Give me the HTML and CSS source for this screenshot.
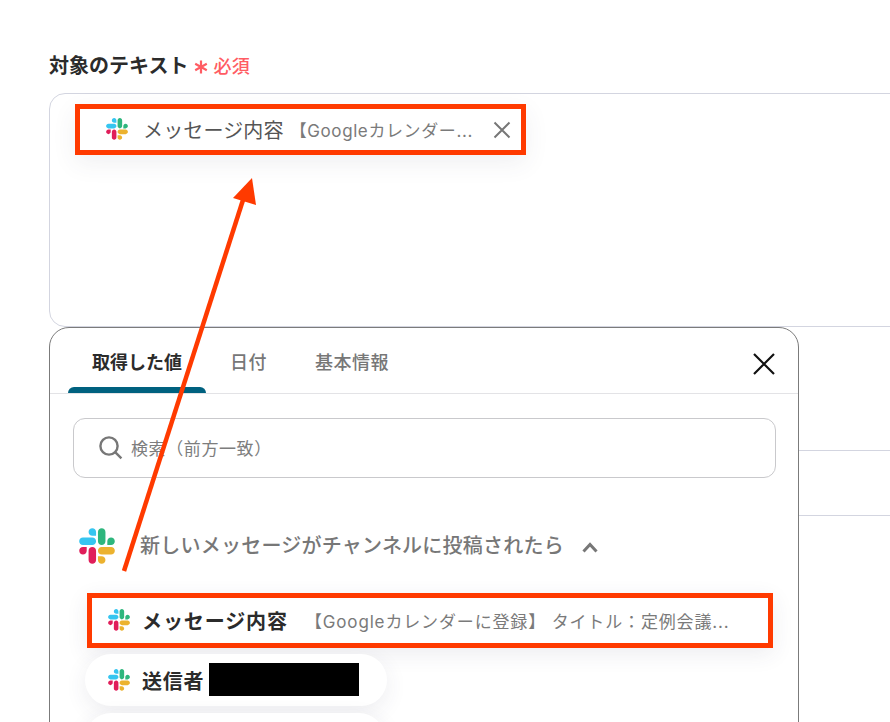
FILE: index.html
```html
<!DOCTYPE html>
<html lang="ja">
<head>
<meta charset="utf-8">
<title>対象のテキスト</title>
<link rel="stylesheet" href="styles.css">
</head>
<body>
<svg class="defs" width="0" height="0" aria-hidden="true">
  <symbol id="slack" viewBox="0 0 127 127">
    <path d="M27.2 80c0 7.3-5.9 13.2-13.2 13.2C6.7 93.2.8 87.3.8 80c0-7.3 5.9-13.2 13.2-13.2h13.2V80zm6.6 0c0-7.3 5.9-13.2 13.2-13.2 7.3 0 13.2 5.9 13.2 13.2v33c0 7.3-5.9 13.2-13.2 13.2-7.3 0-13.2-5.9-13.2-13.2V80z" fill="#E01E5A"/>
    <path d="M47 27c-7.3 0-13.2-5.9-13.2-13.2C33.8 6.5 39.7.6 47 .6c7.3 0 13.2 5.9 13.2 13.2V27H47zm0 6.7c7.3 0 13.2 5.9 13.2 13.2 0 7.3-5.9 13.2-13.2 13.2H13.9C6.6 60.1.7 54.2.7 46.9c0-7.3 5.9-13.2 13.2-13.2H47z" fill="#36C5F0"/>
    <path d="M99.9 46.9c0-7.3 5.9-13.2 13.2-13.2 7.3 0 13.2 5.9 13.2 13.2 0 7.3-5.9 13.2-13.2 13.2H99.9V46.9zm-6.6 0c0 7.3-5.9 13.2-13.2 13.2-7.3 0-13.2-5.9-13.2-13.2V13.8C66.9 6.5 72.8.6 80.1.6c7.3 0 13.2 5.9 13.2 13.2v33.1z" fill="#2EB67D"/>
    <path d="M80.1 99.8c7.3 0 13.2 5.9 13.2 13.2 0 7.3-5.9 13.2-13.2 13.2-7.3 0-13.2-5.9-13.2-13.2V99.8h13.2zm0-6.6c-7.3 0-13.2-5.9-13.2-13.2 0-7.3 5.9-13.2 13.2-13.2h33.1c7.3 0 13.2 5.9 13.2 13.2 0 7.3-5.9 13.2-13.2 13.2H80.1z" fill="#ECB22E"/>
  </symbol>
</svg>
<main class="page">
  <div class="label-row">
    <span class="label">対象のテキスト</span>
    <span class="required"><svg class="asterisk" viewBox="0 0 14 14"><path d="M7 .5v13M1.200 3.800l11.600 6.400M12.800 3.800 1.200 10.200" /></svg>必須</span>
  </div>
  <div class="textbox">
    <div class="chip">
      <svg class="logo-sm"><use href="#slack"/></svg>
      <span class="chip-name">メッセージ内容</span>
      <span class="chip-value">【Googleカレンダー...</span>
      <svg class="chip-x" viewBox="0 0 18 18"><path d="M1.500 1.500l15 15M16.500 1.500l-15 15"/></svg>
    </div>
  </div>
  <div class="rule rule-a"></div>
  <div class="rule rule-b"></div>

  <section class="panel">
    <div class="tabs">
      <div class="tab tab-active">取得した値</div>
      <div class="tab tab-date">日付</div>
      <div class="tab tab-info">基本情報</div>
      <svg class="close" viewBox="0 0 22 22"><path d="M1 1l20 20M21 1 1 21"/></svg>
    </div>
    <div class="search">
      <svg class="search-icon" viewBox="0 0 24 24"><circle cx="10" cy="10" r="8.600"/><path d="M16.400 16.400l6 6"/></svg>
      <span class="search-text">検索（前方一致）</span>
    </div>
    <div class="group-head">
      <svg class="logo-lg"><use href="#slack"/></svg>
      <span class="group-title">新しいメッセージがチャンネルに投稿されたら</span>
      <svg class="chevron" viewBox="0 0 16 11"><path d="M1.500 9.500 8 2.500l6.500 7"/></svg>
    </div>
    <div class="items">
      <div class="item item-framed">
        <svg class="logo-sm"><use href="#slack"/></svg>
        <span class="item-name">メッセージ内容</span>
        <span class="item-value">【Googleカレンダーに登録】 タイトル：定例会議...</span>
      </div>
      <div class="item item-pill">
        <svg class="logo-sm"><use href="#slack"/></svg>
        <span class="item-name">送信者</span>
        <span class="redacted"></span>
      </div>
      <div class="item item-pill item-next"></div>
    </div>
  </section>

  <svg class="arrow" viewBox="0 0 890 722">
    <path class="arrow-line" d="M124 571 243 200"/>
    <path class="arrow-head" d="M252 178 256 205 233 198Z"/>
  </svg>
</main>
</body>
</html>
```
FILE: styles.css
```css
* { box-sizing: border-box; }
html, body { margin: 0; padding: 0; background: #fff; }
body {
  font-family: Inter, "Noto Sans CJK JP", "Noto Sans", sans-serif;
  color: #333;
}
.defs { position: absolute; }
.page {
  position: relative;
  width: 890px;
  height: 722px;
  overflow: hidden;
  padding: 50px 0 0 49px;
}
.label-row { display: flex; align-items: center; height: 29px; }
.label { font-size: 20px; font-weight: 600; color: #2b2b2b; }
.required {
  display: flex; align-items: center; gap: 5px;
  margin-left: 6px;
  font-size: 18px; font-weight: 500; color: #ff5c63;
  letter-spacing: .3px;
}
.asterisk { width: 14px; height: 14px; margin-top: 4px; fill: none; stroke: #ff5c63; stroke-width: 2.200; }
.textbox {
  width: 900px;
  height: 234px;
  margin-top: 14px;
  padding: 10px 0 0 25px;
  border: 1px solid #d3d5e0;
  border-radius: 16px;
}
.chip {
  display: flex; align-items: center;
  width: 451px; height: 51px;
  padding: 0 10px 0 26px;
  border: 5px solid #ff3a00;
  background: #fff;
  box-shadow: 0 8px 24px rgba(60, 60, 90, .08);
}
.logo-sm { width: 22px; height: 22px; flex: none; margin-bottom: 1px; }
.item-pill .logo-sm { margin-bottom: 0; }
.logo-lg { width: 36px; height: 36px; flex: none; }
.chip-name { margin-left: 15px; font-size: 20px; color: #555; white-space: nowrap; letter-spacing: .15px; }
.chip-value { margin-left: 6px; font-size: 17px; color: #7a7a7a; letter-spacing: .6px; white-space: nowrap; }
.chip-x { width: 18px; height: 18px; margin-left: auto; fill: none; stroke: #777; stroke-width: 2; }
.rule { width: 841px; height: 1px; background: #d3d5e0; }
.rule-a { margin-top: 123px; }
.rule-b { margin-top: 64px; }

.panel {
  position: absolute;
  left: 49px; top: 327px;
  width: 750px; height: 420px;
  background: #fff;
  border: 1px solid #7b7b7b;
  border-radius: 20px;
}
.tabs {
  position: relative;
  display: flex;
  height: 66px;
  border-bottom: 1px solid #e3e3e6;
}
.tab { height: 65px; padding-top: 20px; font-size: 18px; font-weight: 500; line-height: 29px; color: #777; letter-spacing: .5px; }
.tab-active {
  width: 138px;
  margin-left: 18px;
  text-align: center;
  font-weight: 600;
  color: #2b2b2b;
  position: relative;
  letter-spacing: 0;
}
.tab-active::after {
  content: "";
  position: absolute;
  left: 0; right: 0; bottom: 0;
  height: 6px;
  background: #00617f;
  border-radius: 6px 6px 0 0;
}
.tab-date { margin-left: 24px; width: 85px; }
.close {
  position: absolute; right: 23px; top: 25px;
  width: 22px; height: 22px;
  fill: none; stroke: #111; stroke-width: 2.200;
}
.search {
  display: flex; align-items: center;
  width: 703px; height: 60px;
  margin: 24px 0 0 23px;
  padding-left: 25px;
  border: 1px solid #c9c9cc;
  border-radius: 12px;
}
.search-icon { width: 24px; height: 24px; fill: none; stroke: #777; stroke-width: 2.400; }
.search-text { margin: 0 0 2px 8px; font-size: 17px; color: #7d7d7d; letter-spacing: .6px; }
.group-head {
  display: flex; align-items: center;
  height: 36px;
  margin: 50px 0 0 29px;
}
.group-title { margin: 0 0 3px 25px; font-size: 20px; font-weight: 500; color: #777; letter-spacing: .24px; }
.chevron { width: 16px; height: 11px; margin: 2px 0 0 18px; fill: none; stroke: #777; stroke-width: 3; }
.items { display: flex; flex-direction: column; gap: 6px; margin: 29px 0 0 35px; align-items: flex-start; }
.item {
  display: flex; align-items: center;
  background: #fff;
  box-shadow: 0 6px 22px rgba(60, 60, 90, .09);
}
.item-framed {
  width: 686px; height: 55px;
  margin-left: 2px;
  padding-left: 16px;
  border: 5px solid #ff3a00;
}
.item-pill {
  width: 302px; height: 52px;
  padding-left: 23px;
  border-radius: 26px;
}
.item-next { width: 300px; height: 52px; margin-top: 1px; }
.item-name { margin-left: 12px; font-size: 20px; font-weight: 600; color: #2b2b2b; white-space: nowrap; letter-spacing: .9px; }
.item-pill .item-name { letter-spacing: .7px; margin-left: 12px; }
.item-value { margin-left: 17px; font-size: 17px; color: #7a7a7a; letter-spacing: .85px; white-space: nowrap; }
.redacted { width: 150px; height: 33px; margin: 0 0 1px 5px; background: #000; }
.arrow { position: absolute; left: 0; top: 0; width: 890px; height: 722px; pointer-events: none; }
.arrow-line { fill: none; stroke: #ff3a00; stroke-width: 4.500; }
.arrow-head { fill: #ff3a00; }
```
